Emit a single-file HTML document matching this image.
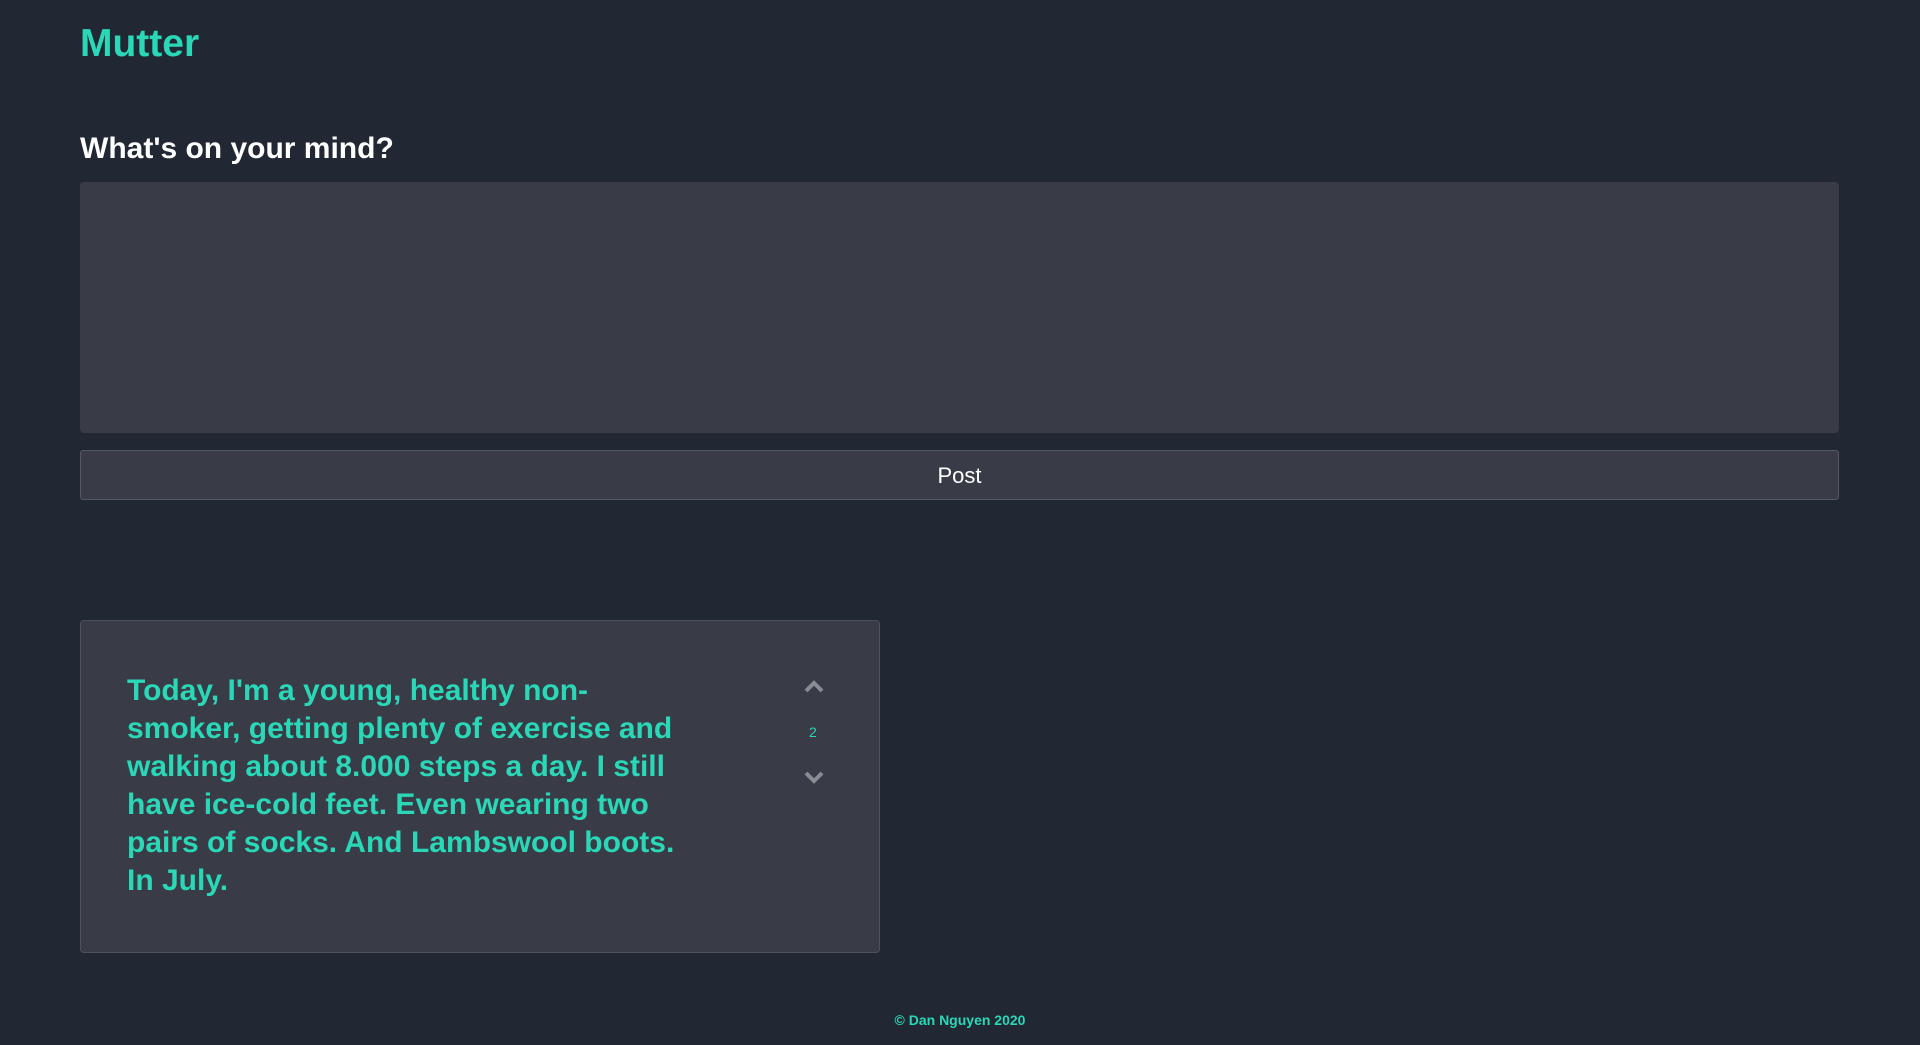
<!DOCTYPE html>
<html><head><style>
body{margin:0;background:#212733;width:1920px;height:1045px;overflow:hidden;font-family:"Liberation Sans",sans-serif;position:relative}
.t{position:absolute;left:80px;top:22px;font-size:39px;font-weight:bold;color:#2ad8b8;margin:0}
.q{position:absolute;left:80px;top:132px;font-size:30px;font-weight:bold;color:#fff;margin:0}
.ta{position:absolute;left:80px;top:182px;width:1759px;height:251px;background:#393c47;border-radius:4px}
.btn{position:absolute;left:80px;top:450px;width:1757px;height:48px;background:#393c47;border:1px solid #555963;border-radius:3px;color:#fff;font-size:22px;text-align:center;line-height:50px}
.card{position:absolute;left:80px;top:620px;width:798px;height:331px;background:#393c47;border:1px solid #4e515b;border-radius:4px}
.txt{position:absolute;left:46px;top:51px;font-size:30px;font-weight:bold;color:#2ad8b8;line-height:38px;white-space:nowrap;letter-spacing:0px}
.num{position:absolute;left:728px;top:103px;font-size:14px;color:#2ad8b8}
.foot{position:absolute;left:0;width:1920px;top:1012px;text-align:center;font-size:14px;font-weight:bold;color:#2ad8b8}
</style></head><body>
<h1 class="t">Mutter</h1>
<h2 class="q">What's on your mind?</h2>
<div class="ta"></div>
<div class="btn">Post</div>
<div class="card">
<div class="txt">Today, I'm a young, healthy non-<br>smoker, getting plenty of exercise and<br>walking about 8.000 steps a day. I still<br>have ice-cold feet. Even wearing two<br>pairs of socks. And Lambswool boots.<br>In July.</div>
<svg style="position:absolute;left:722px;top:59px" width="22" height="14" viewBox="0 0 22 14"><path d="M3 11 L11 3 L19 11" fill="none" stroke="#8a8c93" stroke-width="4"/></svg>
<div class="num">2</div>
<svg style="position:absolute;left:722px;top:149px" width="22" height="14" viewBox="0 0 22 14"><path d="M3 3 L11 11 L19 3" fill="none" stroke="#8a8c93" stroke-width="4"/></svg>
</div>
<div class="foot">© Dan Nguyen 2020</div>
</body></html>
